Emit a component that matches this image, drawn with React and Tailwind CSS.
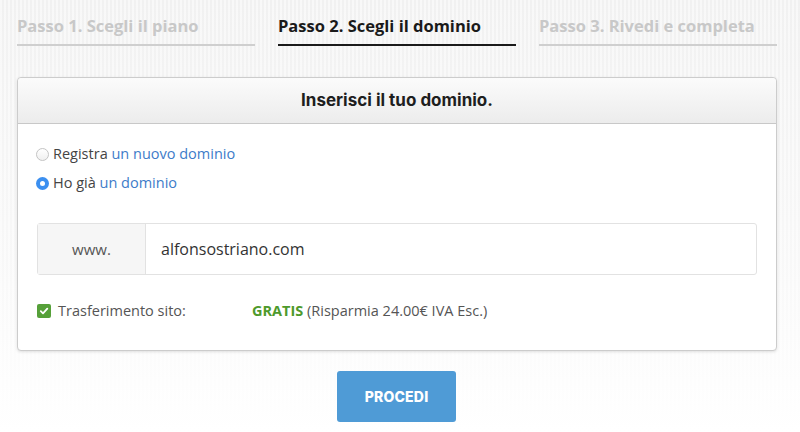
import React from "react";

export default function App() {
  const os = { fontFamily: '"Open Sans", "Liberation Sans", sans-serif' };
  const mont = { fontFamily: 'Inter, "Liberation Sans", sans-serif' };
  return (
    <div
      className="w-[800px] h-[432px] overflow-hidden bg-[linear-gradient(180deg,#f1f1f1_0%,#f8f8f8_60%,#ffffff_100%)]"
      style={os}
    >
      <div className="h-full bg-[repeating-linear-gradient(90deg,rgba(255,255,255,0.5)_0px,rgba(255,255,255,0.5)_2px,rgba(0,0,0,0)_2px,rgba(0,0,0,0)_4px)] px-[17px]">
        {/* Steps */}
        <div className="flex gap-[23px] pt-[15px]">
          <div className="w-[238px] border-b-2 border-[#cfcfcf] pb-[7px] text-[16.5px] font-bold text-[#c8c8c8] leading-[22px]">
            Passo 1. Scegli il piano
          </div>
          <div className="w-[238px] border-b-2 border-[#1a1a1a] pb-[7px] text-[16.5px] font-bold text-[#1a1a1a] leading-[22px]">
            Passo 2. Scegli il dominio
          </div>
          <div className="w-[238px] border-b-2 border-[#cfcfcf] pb-[7px] text-[16.5px] font-bold text-[#c8c8c8] leading-[22px]">
            Passo 3. Rivedi e completa
          </div>
        </div>

        {/* Card */}
        <div className="mt-[31px] w-[760px] rounded-[4px] border border-[#cccccc] bg-white shadow-[0_1px_3px_rgba(0,0,0,0.12)]">
          <div
            className="h-[46px] flex items-center justify-center rounded-t-[4px] border-b border-[#c8c8c8] bg-[linear-gradient(180deg,#fbfbfb_0%,#ececec_100%)] text-[17px] font-bold text-[#1e1e1e]"
            style={mont}
          >
            Inserisci il tuo dominio.
          </div>
          <div className="px-[18px] pt-[21px] pb-[30px]">
            <div className="flex items-center h-[18px] text-[14.5px] text-[#444]">
              <span className="w-[13px] h-[13px] rounded-full border border-[#c4c4c4] bg-[linear-gradient(180deg,#ffffff,#f0f0f0)] mr-[4px]" />
              <span>Registra&nbsp;</span>
              <span className="text-[#3d7cc9]">un nuovo dominio</span>
            </div>
            <div className="flex items-center h-[18px] mt-[11px] text-[14.5px] text-[#444]">
              <span className="w-[13px] h-[13px] rounded-full bg-[#3b8ff0] flex items-center justify-center mr-[4px]">
                <span className="w-[5px] h-[5px] rounded-full bg-white" />
              </span>
              <span>Ho già&nbsp;</span>
              <span className="text-[#3d7cc9]">un dominio</span>
            </div>

            <div className="mt-[31px] ml-[1px] w-[720px] h-[52px] flex rounded-[3px] border border-[#e2e2e2]">
              <div className="w-[108px] flex items-center justify-center bg-[#f6f6f6] border-r border-[#e2e2e2] text-[15px] text-[#555]">
                www.
              </div>
              <div className="flex items-center pl-[15px] text-[16px] text-[#333]">
                alfonsostriano.com
              </div>
            </div>

            <div className="mt-[27px] ml-[1px] flex items-center text-[14.5px] text-[#555] h-[18px]">
              <span className="w-[14px] h-[14px] rounded-[2px] bg-[#56a039] flex items-center justify-center mr-[7px]">
                <svg width="10" height="10" viewBox="0 0 10 10">
                  <path d="M1.8 5.2 L4 7.3 L8.3 2.6" fill="none" stroke="white" strokeWidth="1.8" strokeLinecap="round" strokeLinejoin="round" />
                </svg>
              </span>
              <span className="w-[194px]">Trasferimento sito:</span>
              <span className="font-bold text-[#4e9a2c]">GRATIS</span>
              <span>&nbsp;(Risparmia 24.00€ IVA Esc.)</span>
            </div>
          </div>
        </div>

        {/* Button */}
        <div className="flex justify-center mt-[20px] pr-[7px]">
          <button
            className="w-[119px] h-[51px] rounded-[3px] bg-[#4f9bd6] text-white text-[14px] font-extrabold tracking-[0.2px]"
            style={mont}
          >
            PROCEDI
          </button>
        </div>
      </div>
    </div>
  );
}
